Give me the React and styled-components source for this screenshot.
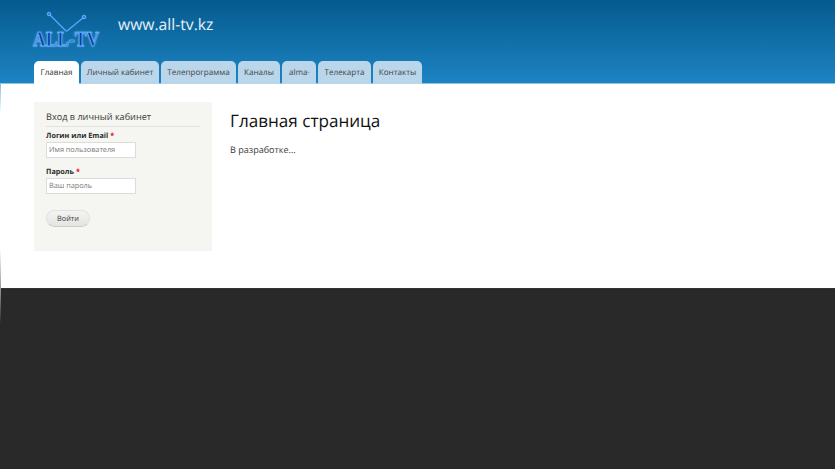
import React from "react";
import styled, { createGlobalStyle } from "styled-components";

const Global = createGlobalStyle`
  html, body { margin: 0; padding: 0; background: #292929; }
  body { font-family: "Open Sans", "Noto Sans", sans-serif; color: #3b3b3b; text-rendering: geometricPrecision; }
`;
const Page = styled.div`
  position: relative; width: 835px; height: 469px; overflow: hidden; display: flex; flex-direction: column;
  background: #292929;
`;
const EdgeShade = styled.div`
  position: absolute; left: 0; top: 84px; width: 1px; height: 240px;
  background: linear-gradient(#86bde0 0, #ffffff 30px, #ffffff 165px, #9a9a9a 204px, #292929 240px);
`;
const Header = styled.header`
  height: 84px; flex: none; box-sizing: border-box; padding: 0 0 0 34px;
  background: linear-gradient(#055a8e 0%, #1d84c3 99%, #8fc4e4 99%);
  display: flex; flex-direction: column; justify-content: space-between;
`;
const Brand = styled.div`
  display: flex; align-items: flex-start; margin-left: -3px; padding-top: 9px; height: 52px;
`;
const LogoWrap = styled.div`
  position: relative; width: 71px; height: 42px; flex: none;
`;
const LogoText = styled.span`
  position: absolute; left: 2px; top: 18px; font: bold 17.5px/24px "Liberation Serif", serif;
  color: #0b3f9c; -webkit-text-stroke: 0.7px #5fb0ff;
  text-shadow: 0 0 2px #9fd0ff; white-space: nowrap;
  transform: scaleY(1.2); transform-origin: 50% 50%;
`;
const SiteName = styled.div`
  margin: 4px 0 0 16px; font-size: 15.7px; line-height: 22px; color: #e8f2f9;
`;
const Tabs = styled.nav`display: flex; gap: 2px; height: 23px; align-items: stretch;`;
const Tab = styled.a`
  box-sizing: border-box; width: ${p => p.$w}px; flex: none; overflow: hidden; white-space: nowrap;
  display: flex; align-items: center; justify-content: center;
  font-size: 8.1px; color: ${p => (p.$active ? "#333" : "#444")};
  background: ${p => (p.$active ? "#fff" : "#b9d6ea")};
  border-radius: 5px 5px 0 0;
  ${p => (p.$clip ? "justify-content: flex-start; padding-left: 7px;" : "")}
`;
const Main = styled.main`
  height: 204px; flex: none; background: #fff; display: flex; box-sizing: border-box;
  padding: 18px 0 0 34px; gap: 18px;
`;
const Sidebar = styled.aside`
  width: 178px; height: 149px; background: #f5f5f1; box-sizing: border-box; padding: 8px 12px 0 12px;
`;
const BlockTitle = styled.h2`
  margin: 0 0 4px; font-size: 9.15px; line-height: 14px; font-weight: 400; color: #3b3b3b;
  border-bottom: 1px solid #e4e4de; padding-bottom: 2px;
`;
const Field = styled.div`margin-bottom: 9px;`;
const Label = styled.label`
  display: block; font-size: 7.25px; line-height: 10px; font-weight: 700; color: #2c2c2c; margin-bottom: 1px;
`;
const Req = styled.span`color: #e00;`;
const Input = styled.input`
  display: block; width: 90px; height: 16px; box-sizing: border-box; padding: 0 2px; margin: 0;
  border: 1px solid #dcdcd8; background: #fff; font: 7.3px "Open Sans", sans-serif; color: #555;
  text-rendering: geometricPrecision;
  outline: none; &::placeholder { color: #777; opacity: 1; }
`;
const Button = styled.button`
  display: block; margin-top: 16px; width: 44px; height: 17px; padding: 0; border-radius: 9px;
  border: 1px solid #e0e0dc; border-bottom-color: #ccc;
  background: linear-gradient(#f4f4f2, #e4e4e2); font: 7.3px "Open Sans", sans-serif; color: #3a3a3a;
  text-rendering: geometricPrecision;
`;
const Content = styled.section`padding-top: 8px;`;
const Title = styled.h1`
  margin: 0; font-size: 17.1px; line-height: 24px; font-weight: 400; color: #111;
`;
const Para = styled.p`margin: 9px 0 0; font-size: 9.05px; line-height: 14px; color: #3b3b3b;`;
const Footer = styled.footer`
  flex: 1; background: #292929; border-top: 1px solid #333;
`;

const tabs = [
  ["Главная", 45], ["Личный кабинет", 78], ["Телепрограмма", 75],
  ["Каналы", 42], ["alma", 34], ["Телекарта", 53], ["Контакты", 49],
];

export default function App() {
  return (
    <Page>
      <Global />
      <Header>
        <Brand>
          <LogoWrap>
            <svg width="71" height="30" viewBox="0 0 71 30" fill="none" aria-hidden="true">
              <g stroke="#5aa6ff" strokeWidth="1.3" strokeLinecap="round">
                <path d="M18 5 L35 22" />
                <path d="M53 8 L36 22" />
              </g>
              <circle cx="18" cy="5" r="1.8" fill="#2f7fe8" stroke="#8cc4ff" strokeWidth=".7" />
              <circle cx="53" cy="8" r="1.8" fill="#2f7fe8" stroke="#8cc4ff" strokeWidth=".7" />
            </svg>
            <LogoText>ALL-TV</LogoText>
          </LogoWrap>
          <SiteName>www.all-tv.kz</SiteName>
        </Brand>
        <Tabs>
          {tabs.map(([t, w], i) => (
            <Tab key={t} $w={w} $active={i === 0} $clip={t === "alma"}>{t === "alma" ? "alma·" : t}</Tab>
          ))}
        </Tabs>
      </Header>
      <Main>
        <Sidebar>
          <BlockTitle>Вход в личный кабинет</BlockTitle>
          <Field>
            <Label>Логин или Email <Req>*</Req></Label>
            <Input placeholder="Имя пользователя" />
          </Field>
          <Field>
            <Label>Пароль <Req>*</Req></Label>
            <Input placeholder="Ваш пароль" />
          </Field>
          <Button>Войти</Button>
        </Sidebar>
        <Content>
          <Title>Главная страница</Title>
          <Para>В разработке...</Para>
        </Content>
      </Main>
      <Footer />
      <EdgeShade />
    </Page>
  );
}
